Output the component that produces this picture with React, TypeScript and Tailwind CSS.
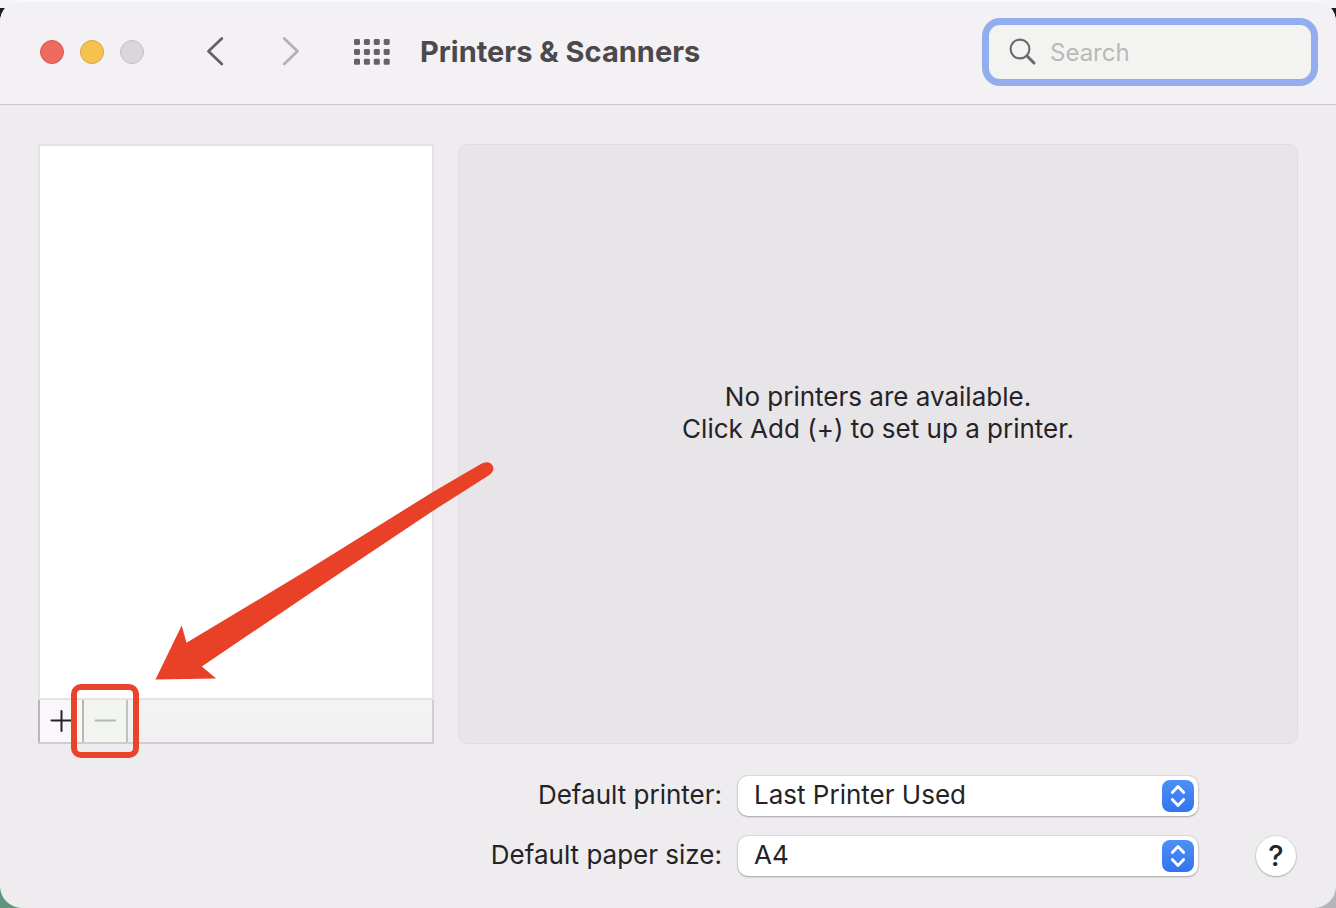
import React from "react";

const DOTS = [0, 1, 2].flatMap((row) => [0, 1, 2, 3].map((col) => ({ row, col })));

function TitleBar() {
  return (
    <header className="flex h-[105px] items-center border-b border-[#c9c7ca] bg-[#f4f1f5] pl-10 pr-[18px] shadow-[inset_0_2px_0_#faf9fb]">
      <div className="flex gap-4">
        <button aria-label="Close" className="size-6 rounded-full border border-[#d5574f] bg-[#ed6a5f]" />
        <button aria-label="Minimize" className="size-6 rounded-full border border-[#d9a53c] bg-[#f5c14f]" />
        <button aria-label="Zoom" disabled className="size-6 rounded-full border border-[#c2c0c3] bg-[#d9d7da]" />
      </div>
      <nav className="ml-[59px] flex items-center">
        <button aria-label="Back" className="flex w-6 justify-center text-[#646265]">
          <svg width="24" height="32" viewBox="0 0 24 32" fill="none" stroke="currentColor" strokeWidth="2.8" strokeLinecap="round" strokeLinejoin="round">
            <path d="M18.800 2.500 5.500 15.200l13.300 12.800" />
          </svg>
        </button>
        <button aria-label="Forward" disabled className="ml-[52px] flex w-6 justify-center text-[#b3b1b4]">
          <svg width="24" height="32" viewBox="0 0 24 32" fill="none" stroke="currentColor" strokeWidth="2.8" strokeLinecap="round" strokeLinejoin="round">
            <path d="M5.200 2.500l13.300 12.700L5.200 28" />
          </svg>
        </button>
        <button aria-label="Show all" className="ml-[51px] text-[#646265]">
          <svg width="36" height="26" viewBox="0 0 36 26" fill="currentColor">
            {DOTS.map(({ row, col }) => (
              <rect key={`${row}-${col}`} x={col * 9.9} y={row * 9.9} width="6" height="6" rx="1.4" />
            ))}
          </svg>
        </button>
      </nav>
      <h1 className="ml-[30px] text-[29px] font-bold leading-9 text-[#4b494c]">Printers &amp; Scanners</h1>
      <label className="ml-auto flex h-[68px] w-[336px] items-center rounded-[18px] border-[7px] border-[#92aeef] bg-[#f3f4f2] pl-5">
        <svg width="28" height="28" viewBox="0 0 28 28" fill="none" stroke="#6b6a6b" strokeLinecap="round">
          <circle cx="11" cy="11" r="9.4" strokeWidth="2.1" />
          <path d="M17.8 17.8 25 25" strokeWidth="3" />
        </svg>
        <input
          type="text"
          aria-label="Search"
          placeholder="Search"
          className="ml-[13px] min-w-0 flex-1 bg-transparent pt-[2px] text-[24px] leading-8 text-[#252326] outline-none placeholder:text-[#b9b9b8]"
        />
      </label>
    </header>
  );
}

function PrinterList() {
  return (
    <section aria-label="Printers" className="relative flex w-[396px] shrink-0 flex-col">
      <div className="flex-1 border-2 border-[#e4e2e5] bg-white" />
      <div className="flex h-11 border-b-2 border-r-2 border-[#cfcdd0] bg-linear-to-b from-[#f4f4f4] to-[#f1eff2]">
        <button aria-label="Add printer" className="flex w-[46px] items-center justify-center border-x-2 border-[#b8b6b9] bg-[#f9f7fa]">
          <svg width="22" height="22" viewBox="0 0 22 22" stroke="#252326" strokeWidth="2" strokeLinecap="round">
            <path d="M11.500 1v20M1.500 10.500h20" />
          </svg>
        </button>
        <div className="relative flex">
          <button aria-label="Remove printer" disabled className="flex w-11 items-center justify-center border-r-2 border-[#bfc1bd] bg-[#f2f4f0]">
            <svg width="22" height="22" viewBox="0 0 22 22" stroke="#b6b8b4" strokeWidth="2" strokeLinecap="round">
              <path d="M1.500 10.500h20" />
            </svg>
          </button>
          <div className="pointer-events-none absolute -bottom-4 -left-[13px] -right-[11px] -top-4 rounded-[10px] border-6 border-[#e9432b]" />
        </div>
      </div>
      <svg
        aria-hidden="true"
        className="pointer-events-none absolute bottom-[60px] left-[116px] z-10"
        width="342"
        height="224"
        viewBox="0 0 342 224"
        fill="#e94127"
      >
        <path d="M1.500 219.500 27.700 165.500 32.500 182.800 152.700 110.500 278 32.500 326 4.500C332 .8 337 1.500 339 6.500C340.500 10.500 338 13.500 333 16.500L278 51.500 186 113 47.800 206.500 62.200 218.500Z" />
      </svg>
    </section>
  );
}

function PopUp({ id, label, options }: { id: string; label: string; options: string[] }) {
  return (
    <>
      <label htmlFor={id} className="pb-[2px] text-right">{label}</label>
      <div className="relative">
        <select
          id={id}
          className="block h-10 w-full appearance-none rounded-[10px] bg-white pb-[2px] pl-4 pr-12 shadow-[0_0_1px_1px_rgba(0,0,0,0.08),0_1px_2px_rgba(0,0,0,0.25)] outline-none"
        >
          {options.map((option) => (
            <option key={option}>{option}</option>
          ))}
        </select>
        <span className="pointer-events-none absolute right-1 top-1 flex size-8 items-center justify-center rounded-lg bg-linear-to-b from-[#4d90f6] to-[#3374ef]">
          <svg width="32" height="32" viewBox="0 0 32 32" fill="none" stroke="#fff" strokeWidth="2.8" strokeLinecap="round" strokeLinejoin="round">
            <path d="M10.300 12.500 16 6.500l5.700 6M10.300 19.500l5.700 6 5.700-6" />
          </svg>
        </span>
      </div>
    </>
  );
}

export default function App() {
  return (
    <div className="relative isolate flex min-h-screen flex-col bg-linear-to-b from-[#f4f3f5] from-[8px] via-[#1d1b20] via-[8px] to-[#1d1b20] font-['Inter','Liberation_Sans',sans-serif]">
      <div aria-hidden="true" className="absolute inset-x-0 bottom-0 -z-10 flex h-10">
        <div className="flex-1 bg-[#5f957c]" />
        <div className="flex-1 bg-[#b5b4b6]" />
      </div>
      <div className="flex flex-1 flex-col overflow-hidden rounded-[22px] bg-[#efecf0]">
        <TitleBar />
        <main className="flex flex-1 flex-col px-[38px] pb-8 pt-[39px] text-[26px] leading-8 text-[#252326]">
          <div className="flex flex-1 gap-6">
            <PrinterList />
            <section className="flex min-h-[480px] flex-1 flex-col items-center justify-center rounded-[10px] border border-[#dddbde] bg-[#e8e5e9] pb-[62px] text-center">
              <p>No printers are available.</p>
              <p>Click Add (+) to set up a printer.</p>
            </section>
          </div>
          <div className="mt-8 flex items-end justify-end pr-[2px]">
            <form className="grid grid-cols-[auto_460px] items-center gap-x-4 gap-y-5">
              <PopUp id="printer" label="Default printer:" options={["Last Printer Used"]} />
              <PopUp id="paper" label="Default paper size:" options={["A4", "US Letter"]} />
            </form>
            <button
              aria-label="Help"
              className="ml-[58px] flex size-10 items-center justify-center rounded-full bg-white text-[29px] font-medium shadow-[0_0_1px_1px_rgba(0,0,0,0.07),0_1px_2px_rgba(0,0,0,0.22)]"
            >
              ?
            </button>
          </div>
        </main>
      </div>
    </div>
  );
}
